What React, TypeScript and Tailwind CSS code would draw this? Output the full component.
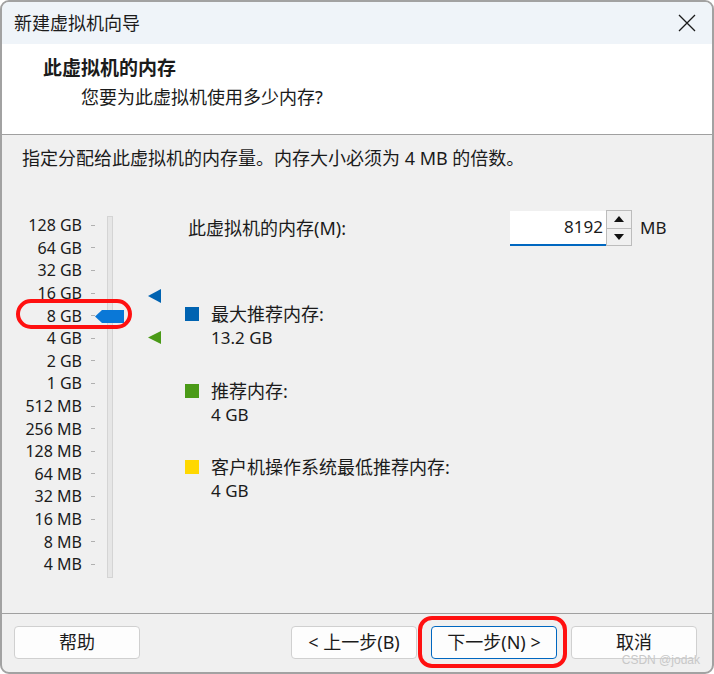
import { useState } from 'react';

const sizes = [
  '128 GB', '64 GB', '32 GB', '16 GB', '8 GB', '4 GB', '2 GB', '1 GB',
  '512 MB', '256 MB', '128 MB', '64 MB', '32 MB', '16 MB', '8 MB', '4 MB',
];

function Legend({ color, label, value }: { color: string; label: string; value: string }) {
  return (
    <div>
      <div className="flex items-center h-[24px]">
        <div className={`w-[14px] h-[14px] ${color}`} />
        <span className="ml-[12px]">{label}</span>
      </div>
      <div className="h-[24px] leading-[24px] pl-[26px] text-[17px]">{value}</div>
    </div>
  );
}

function Btn({ children, primary }: { children: React.ReactNode; primary?: boolean }) {
  return (
    <button
      className={`w-[126px] h-[33px] rounded-[4px] bg-[#fdfdfd] border text-[18px] ${
        primary ? 'border-[#0067c0]' : 'border-[#d0d0d0]'
      }`}
    >
      {children}
    </button>
  );
}

export default function App() {
  const [memory, setMemory] = useState(8192);

  return (
    <div className="w-[714px] h-[674px] bg-white font-['Noto_Sans','Noto_Sans_CJK_SC',sans-serif] text-[18px] text-[#1b1b1b]">
      <div className="w-full h-full border-2 border-[#a2a2a2] rounded-[9px] overflow-hidden flex flex-col bg-[#f0f0f0] relative">
        {/* title bar */}
        <div className="h-[42px] bg-[#eff4f9] flex items-center justify-between pl-[12px] pr-[16px] shrink-0">
          <span className="text-[18px]">新建虚拟机向导</span>
          <svg width="18" height="18" viewBox="0 0 18 18" stroke="#1b1b1b" strokeWidth="1.3">
            <path d="M1 1 L17 17 M17 1 L1 17" />
          </svg>
        </div>

        {/* header */}
        <div className="h-[91px] bg-white border-b border-[#a0a0a0] shrink-0 pl-[41px] pt-[10px]">
          <div className="font-bold text-[19px] h-[28px] leading-[28px]">此虚拟机的内存</div>
          <div className="pl-[38px] h-[30px] leading-[30px]">您要为此虚拟机使用多少内存?</div>
        </div>

        {/* body */}
        <div className="flex-1">
          <div className="pl-[20px] pt-[11px] h-[35px] leading-[24px]">
            指定分配给此虚拟机的内存量。内存大小必须为 4 MB 的倍数。
          </div>

          <div className="flex mt-[40px]">
            {/* slider */}
            <div className="relative w-[183px] mt-[4px]">
              {sizes.map(s => (
                <div key={s} className="flex items-center h-[22.6px]">
                  <span className="w-[80px] text-right text-[16px] leading-[20px]">{s}</span>
                  <span className="ml-[9px] w-[4px] h-px bg-[#b0b0b0]" />
                </div>
              ))}
              <div className="absolute left-[105px] top-[2px] bottom-[-2px] w-[6px] bg-[#e6e6e6] border border-[#d4d4d4]" />
              <svg className="absolute left-[93px] top-[96px]" width="30" height="13" viewBox="0 0 30 13">
                <polygon points="0,6.5 7,0 29,0 29,13 7,13" fill="#0a78d7" />
              </svg>
              <svg className="absolute left-[146px] top-[75px]" width="13" height="14" viewBox="0 0 13 14">
                <polygon points="0,7 13,0 13,14" fill="#0063b1" />
              </svg>
              <svg className="absolute left-[146px] top-[117px]" width="13" height="13" viewBox="0 0 13 13">
                <polygon points="0,6.5 13,0 13,13" fill="#4a9a17" />
              </svg>
              <div className="absolute left-[14px] top-[85px] w-[116px] h-[30px] rounded-full border-4 border-[#ff1010]" />
            </div>

            {/* settings */}
            <div>
              <div className="flex items-center h-[36px]">
                <span className="w-[325px] pl-[3px]">此虚拟机的内存(M):</span>
                <div className="w-[96px] h-[35px] bg-white border-b-2 border-[#0067c0] flex items-center justify-end pr-[3px] text-[17px]">
                  {memory}
                </div>
                <div className="w-[26px] h-[36px] border border-[#bcbcbc] flex flex-col">
                  <button
                    onClick={() => setMemory(memory + 4)}
                    className="flex-1 flex items-center justify-center border-b border-[#bcbcbc]"
                  >
                    <svg width="10" height="6" viewBox="0 0 10 6"><polygon points="5,0 10,6 0,6" fill="#111" /></svg>
                  </button>
                  <button
                    onClick={() => setMemory(Math.max(4, memory - 4))}
                    className="flex-1 flex items-center justify-center"
                  >
                    <svg width="10" height="6" viewBox="0 0 10 6"><polygon points="0,0 10,0 5,6" fill="#111" /></svg>
                  </button>
                </div>
                <span className="ml-[8px] text-[17px]">MB</span>
              </div>

              <div className="mt-[56px]">
                <Legend color="bg-[#0063b1]" label="最大推荐内存:" value="13.2 GB" />
              </div>
              <div className="mt-[29px]">
                <Legend color="bg-[#4a9a17]" label="推荐内存:" value="4 GB" />
              </div>
              <div className="mt-[28px]">
                <Legend color="bg-[#ffd800]" label="客户机操作系统最低推荐内存:" value="4 GB" />
              </div>
            </div>
          </div>
        </div>

        {/* footer */}
        <div className="h-[59px] border-t border-[#a0a0a0] shrink-0 flex items-start pt-[12px] pl-[12px]">
          <Btn>帮助</Btn>
          <div className="ml-[151px] flex gap-[14px]">
            <Btn>&lt; 上一步(B)</Btn>
            <div className="relative">
              <Btn primary>下一步(N) &gt;</Btn>
              <div className="absolute -left-[13px] -top-[10px] -right-[10px] -bottom-[9px] rounded-[14px] border-4 border-[#ff1010]" />
            </div>
            <Btn>取消</Btn>
          </div>
        </div>

        <div className="absolute right-[12px] bottom-[3px] text-[12px] text-[#c8c8c8] font-['Liberation_Sans',sans-serif]">
          CSDN @jodak
        </div>
      </div>
    </div>
  );
}
